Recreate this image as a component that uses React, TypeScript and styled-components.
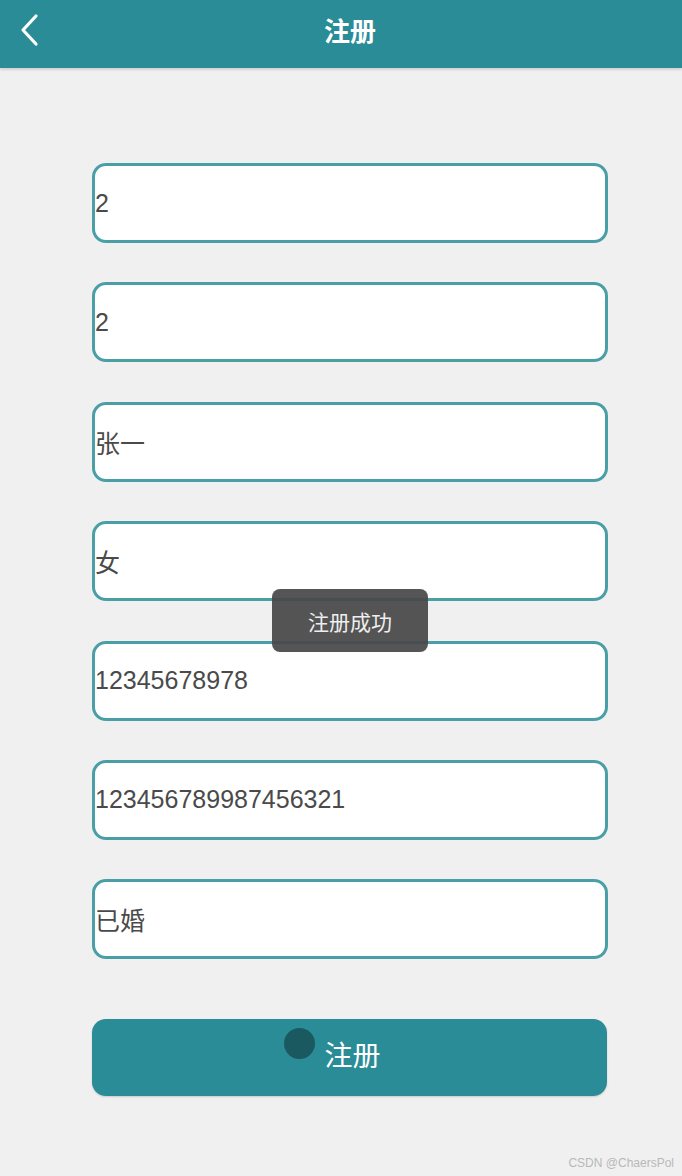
import React from "react";
import styled, { createGlobalStyle } from "styled-components";

const Global = createGlobalStyle`
  html, body { margin: 0; padding: 0; background: #f0f0f0; }
  body { font-family: "Liberation Sans", Arial, "Noto Sans CJK SC", sans-serif; }
  * { box-sizing: border-box; }
`;

const Page = styled.div`
  position: relative;
  width: 682px;
  min-height: 1176px;
  background: #f0f0f0;
`;

const Header = styled.header`
  height: 68px;
  padding-bottom: 8px;
  background: #2a8c97;
  display: flex;
  align-items: center;
  position: relative;
  box-shadow: 0 2px 2px rgba(0, 0, 0, 0.12);
`;

const BackButton = styled.button`
  width: 60px;
  height: 60px;
  border: none;
  background: transparent;
  padding: 0 0 0 18px;
  display: flex;
  align-items: center;
  cursor: pointer;
`;

const Title = styled.h1`
  flex: 1;
  margin: 0;
  padding-right: 42px;
  line-height: 1;
  text-align: center;
  color: #ffffff;
  font-size: 26px;
  font-weight: bold;
  font-family: "Noto Sans CJK SC", sans-serif;
`;

const Form = styled.form`
  display: flex;
  flex-direction: column;
  gap: 39.4px;
  width: 516px;
  margin: 95px 0 0 92px;
`;

const Field = styled.input`
  height: 80px;
  width: 100%;
  border: 3px solid #4a9fa7;
  border-radius: 14px;
  background: #ffffff;
  padding: 0;
  color: #4a4a4a;
  font-size: 25px;
  font-family: "Liberation Sans", Arial, "Noto Sans CJK SC", sans-serif;
  outline: none;
`;

const SubmitButton = styled.button`
  position: relative;
  margin-top: 20px;
  height: 77px;
  width: 515px;
  border: none;
  border-radius: 14px;
  background: #2a8c97;
  color: #ffffff;
  font-size: 28px;
  font-family: "Noto Sans CJK SC", sans-serif;
  cursor: pointer;
  display: flex;
  align-items: center;
  justify-content: center;
  padding: 0 0 6px 6px;
  box-shadow: 0 1px 2px rgba(0, 0, 0, 0.15);
`;

const TouchDot = styled.span`
  position: absolute;
  left: 192px;
  top: 9px;
  width: 31px;
  height: 31px;
  border-radius: 50%;
  background: #1b5960;
`;

const Toast = styled.div`
  position: absolute;
  left: 272px;
  top: 589px;
  width: 156px;
  height: 63px;
  border-radius: 8px;
  background: rgba(72, 72, 72, 0.93);
  color: #eeeeee;
  font-size: 21px;
  font-family: "Noto Sans CJK SC", sans-serif;
  display: flex;
  align-items: center;
  justify-content: center;
`;

const Watermark = styled.span`
  position: absolute;
  right: 8px;
  bottom: 6px;
  color: #b8b8b8;
  font-size: 12px;
  font-family: "Liberation Sans", Arial, sans-serif;
`;

const values = [
  "2",
  "2",
  "张一",
  "女",
  "12345678978",
  "123456789987456321",
  "已婚",
];

export default function App() {
  return (
    <Page>
      <Global />
      <Header>
        <BackButton aria-label="返回">
          <svg width="22" height="34" viewBox="0 0 22 34" fill="none">
            <path
              d="M18 3 L5 17 L18 31"
              stroke="#ffffff"
              strokeWidth="3.2"
              strokeLinecap="round"
              strokeLinejoin="round"
            />
          </svg>
        </BackButton>
        <Title>注册</Title>
      </Header>
      <Form onSubmit={(e) => e.preventDefault()}>
        {values.map((v, i) => (
          <Field key={i} defaultValue={v} readOnly />
        ))}
        <SubmitButton type="submit">
          <TouchDot />
          注册
        </SubmitButton>
      </Form>
      <Toast>注册成功</Toast>
      <Watermark>CSDN @ChaersPol</Watermark>
    </Page>
  );
}
